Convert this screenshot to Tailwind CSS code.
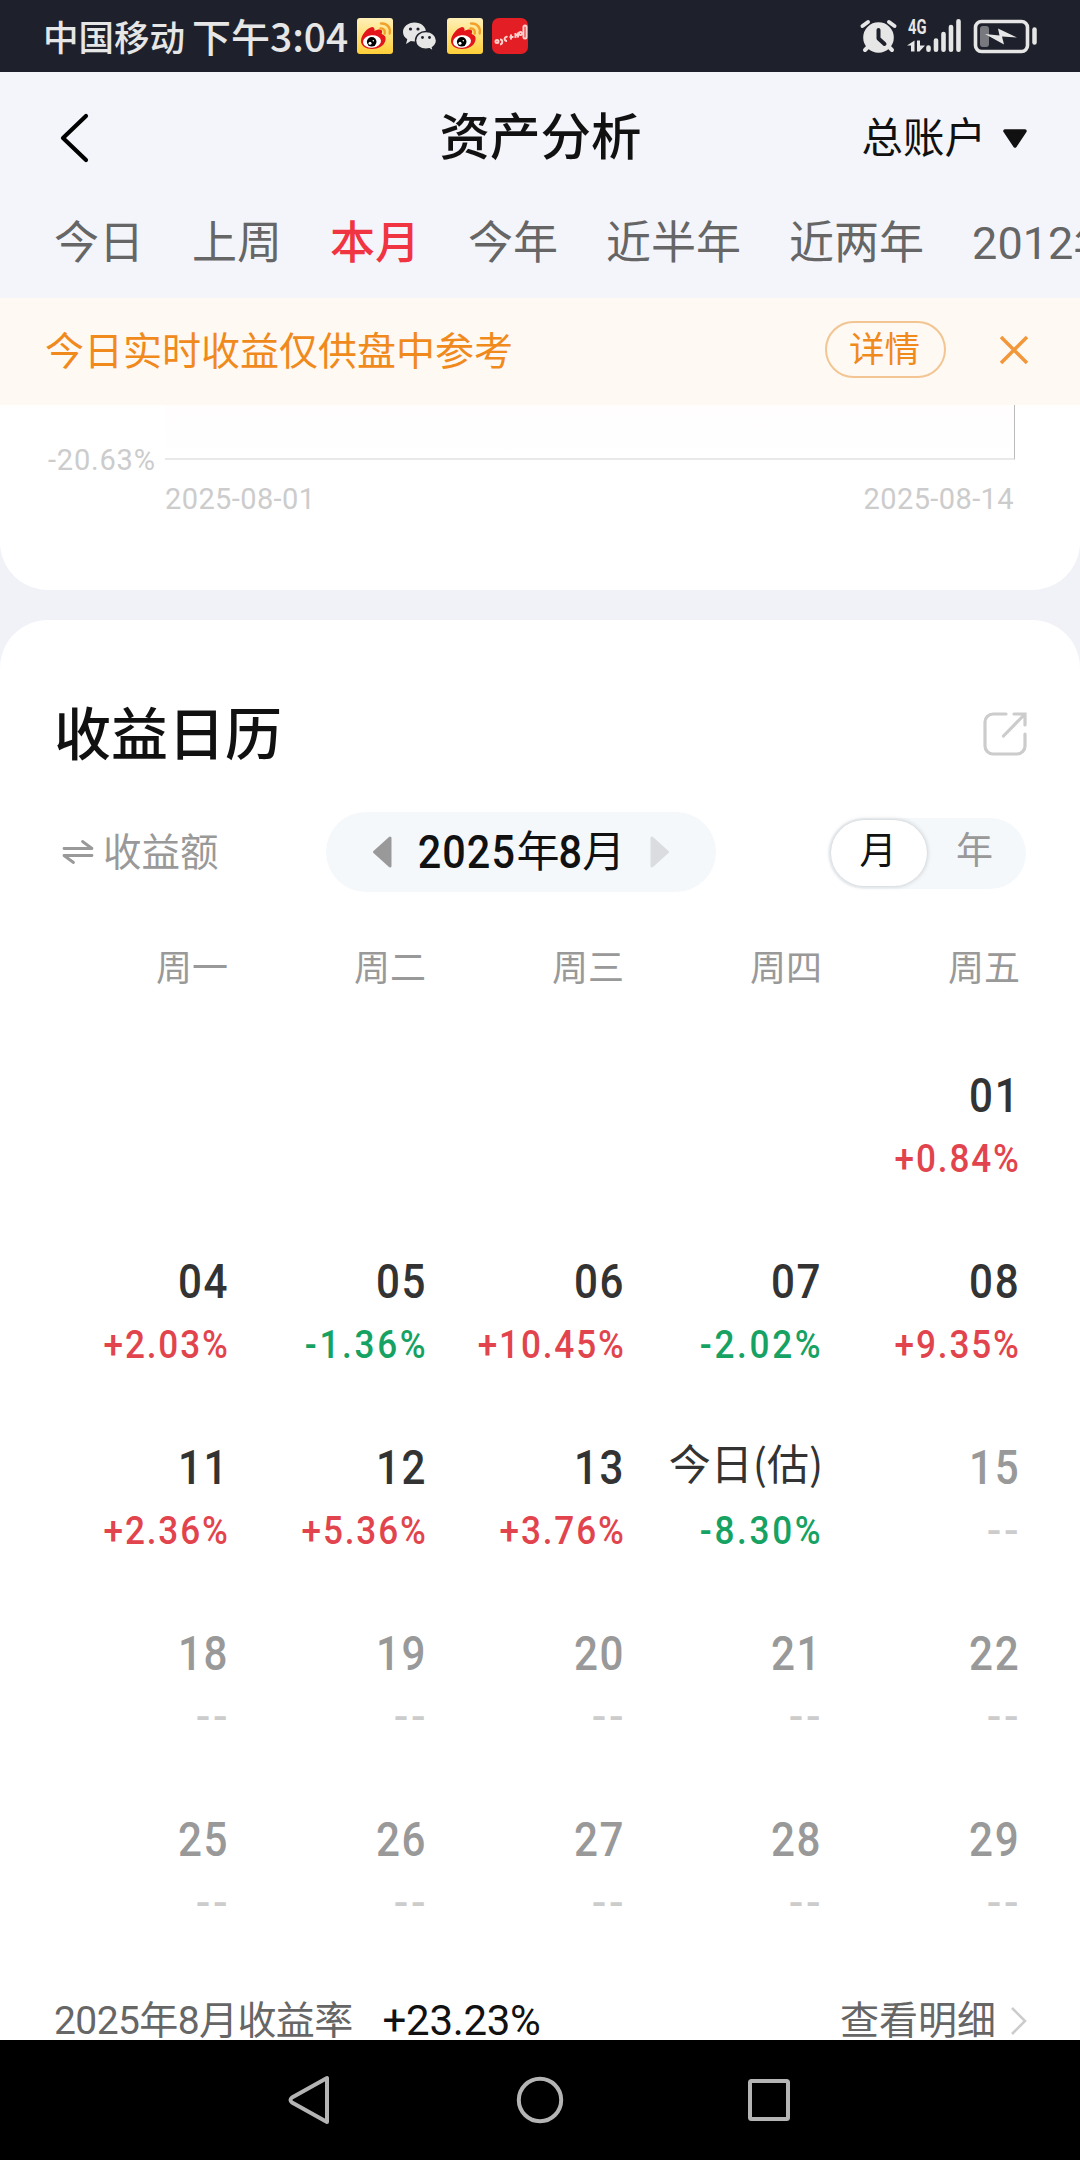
<!DOCTYPE html>
<html lang="zh-CN">
	<head>
		<meta charset="UTF-8" />
		<meta name="viewport" content="width=device-width, initial-scale=1.0" />
		<title>资产分析</title>
		<script src="https://cdn.jsdelivr.net/npm/@tailwindcss/browser@4"></script>
	</head>
	<body
		class="flex flex-col w-[1080px] h-[2160px] overflow-hidden bg-[#f0f2f7] text-[#111] whitespace-nowrap font-[Roboto,'Noto_Sans_CJK_SC',sans-serif]"
	>
		<!-- Status bar -->
		<div
			class="flex items-center justify-between h-[72px] shrink-0 bg-[#1e212b] text-[#e6e6e6] pl-[43px] pr-[43px] font-['Noto_Sans_CJK_SC',sans-serif]"
		>
			<div class="flex items-center">
				<span class="text-[35.5px] leading-[72px] w-[149px] font-medium">中国移动</span>
				<span class="text-[39px] leading-[72px] w-[165px] -mt-0.5 font-medium">下午3:04</span>
				<div class="flex items-center gap-[9px]">
					<svg class="size-9" viewBox="0 0 36 36">
						<defs>
							<linearGradient id="gold" x1="0" y1="0" x2="0" y2="1">
								<stop offset="0" stop-color="#fff0b8" />
								<stop offset="1" stop-color="#ffcf38" />
							</linearGradient>
							<g id="weibo">
								<rect width="36" height="36" rx="3" fill="url(#gold)" />
								<path d="M4 23C4 17 10 10 15 9c2 0 3 2 2.500 4 3-2 7-2 7.500 0 .4 1-.3 2-.3 3 3 1 4.500 3 3.800 6C27.500 28 21 31 15 31S4 28 4 23Z" fill="#e3141a" />
								<ellipse cx="15" cy="23.500" rx="9" ry="6.300" fill="#fff" transform="rotate(-6 15 23.500)" />
								<circle cx="14.700" cy="23.800" r="4.800" fill="#000" />
								<circle cx="13" cy="25.300" r="1.500" fill="#fff" />
								<circle cx="16.300" cy="22.700" r=".8" fill="#fff" />
								<path d="M23.500 10.500c3-.5 5 2 4.200 5M24 5.500c6-.6 10 4.200 8.700 10" fill="none" stroke="#f2a02c" stroke-width="2.400" stroke-linecap="round" />
							</g>
						</defs>
						<use href="#weibo" />
					</svg>
					<svg class="size-9" viewBox="0 0 36 36">
						<path d="M12.500 4.500C6 4.500 1 8.800 1 14c0 3 1.700 5.600 4.300 7.300L4 26l4.800-3c1.200.3 2.400.5 3.700.5 6.500 0 11.500-4.200 11.500-9.500S19 4.500 12.500 4.500Z" fill="#e6e6e6" />
						<path d="M24 13.500c-6 0-10.500 4-10.500 9S18 31.300 24 31.300c1.200 0 2.300-.2 3.400-.5l4 2.500-1-3.800c2.500-1.600 4.100-4.100 4.100-7 0-5-4.500-9-10.500-9Z" fill="#e6e6e6" stroke="#1e212b" stroke-width="1.400" />
						<g fill="#1e212b">
							<circle cx="8.500" cy="11" r="1.600" />
							<circle cx="16" cy="11" r="1.600" />
							<circle cx="20.500" cy="19.500" r="1.400" />
							<circle cx="27.500" cy="19.500" r="1.400" />
						</g>
					</svg>
					<svg class="size-9" viewBox="0 0 36 36"><use href="#weibo" /></svg>
					<svg class="size-9" viewBox="0 0 36 36">
						<rect width="36" height="36" rx="7" fill="#e31e24" />
						<g fill="none" stroke="#ffd0cc" stroke-width="2">
							<circle cx="5" cy="23.500" r="1.500" />
							<path d="M8 21.500c3 0 3 4.500 0 5" />
							<path d="M15.500 19c-3.500-1-4 4-.5 4" />
							<path d="M19 16.500v5M17.500 19h4M23.500 15v5M26 14.500v5M23 17h4" />
							<circle cx="28.500" cy="15.500" r="1.500" />
							<rect x="31.500" y="7.500" width="3" height="13" rx="1.500" />
						</g>
					</svg>
				</div>
			</div>
			<svg class="w-[178px] h-9 overflow-visible" viewBox="0 0 178 36" fill="#e6e6e6">
				<!-- alarm clock -->
				<circle cx="19.500" cy="19.500" r="15.300" />
				<path d="M3.500 8 9 4M35.500 8 30 4M8.500 29.500 6 32M30.500 29.500 33 32" stroke="#e6e6e6" stroke-width="4" stroke-linecap="round" />
				<path d="M19.500 12v8.500l6 5.500" fill="none" stroke="#1e212b" stroke-width="4" stroke-linecap="round" stroke-linejoin="round" />
				<!-- signal -->
				<text x="49" y="16" font-family="Roboto" font-weight="700" font-size="20.500" textLength="18.500" lengthAdjust="spacingAndGlyphs">4G</text>
				<path d="M55.500 22.500v11H52V27.500h-4ZM58 22.500h3v5h5l-5.500 6H58Z" />
				<path d="M69.500 29.500v2.300M77 22.500v9.300M84.500 16v15.800M92 9v22.800M99.500 3.200v28.600" stroke="#e6e6e6" stroke-width="4.600" stroke-linecap="round" />
				<!-- battery -->
				<rect x="116.500" y="3.500" width="52" height="30" rx="6" fill="none" stroke="#e6e6e6" stroke-width="3.600" />
				<rect x="121" y="8" width="9" height="21" rx="3" fill="#77797f" />
				<path d="m126 16 14.500 1.500-1.500-7 19 9-15-1 2 8Z" />
				<path d="M175.500 11.500v13" stroke="#e6e6e6" stroke-width="4.500" stroke-linecap="round" />
			</svg>
		</div>

		<!-- Title bar -->
		<header class="grid grid-cols-3 items-center h-[132px] shrink-0 bg-[#f4f5fa] pl-[59px] pr-[52px]">
			<svg class="w-8 h-[50px]" viewBox="0 0 32 50">
				<path d="M27 3 4 25l23 22" fill="none" stroke="#000" stroke-width="4.200" stroke-linecap="round" stroke-linejoin="round" />
			</svg>
			<h1 class="text-[50.5px] leading-[72px] font-medium text-center -ml-1.5">资产分析</h1>
			<div class="flex items-center justify-end gap-4">
				<span class="text-[41.5px] leading-[60px] mt-0.5">总账户</span>
				<svg class="w-[26px] h-5 mt-0.5" viewBox="0 0 26 20">
					<path d="M3 2h20L13 17Z" fill="#111" stroke="#111" stroke-width="3.500" stroke-linejoin="round" />
				</svg>
			</div>
		</header>

		<!-- Period tabs -->
		<nav class="flex gap-12 h-[94px] shrink-0 bg-[#f4f5fa] pl-[54px] text-[45px] leading-[80px] text-[#666] overflow-hidden">
			<span>今日</span>
			<span>上周</span>
			<span class="font-medium text-[#f03441]">本月</span>
			<span>今年</span>
			<span>近半年</span>
			<span>近两年</span>
			<span>2012年</span>
		</nav>

		<!-- Notice -->
		<div class="flex items-center h-[107px] shrink-0 bg-[#fff9f4] text-[#f08a1c] pl-[45px] pr-[50px]">
			<span class="grow text-[39px] leading-[56px]">今日实时收益仅供盘中参考</span>
			<span class="flex items-center justify-center w-[121px] h-[57px] -mt-1 rounded-full border-2 border-[#f2c592] text-[35.5px] pr-0.5 pt-0.5">详情</span>
			<svg class="w-8 h-8 ml-[52px] -mt-1" viewBox="0 0 32 32">
				<path d="m3 3 26 26M29 3 3 29" stroke="#f2973a" stroke-width="3.500" />
			</svg>
		</div>

		<!-- Chart bottom -->
		<section class="h-[185px] shrink-0 bg-white rounded-b-[48px] text-[#ccc] text-[29px]">
			<div class="flex h-[55px] pl-[48px]">
				<span class="w-[117px] shrink-0 pt-[38px] leading-[34px] tracking-[0.8px]">-20.63%</span>
				<div class="w-[850px] border-b-2 border-[#e9e9e9] border-r border-r-[#bbb] bg-linear-to-b from-[#fffdfd] to-white"></div>
			</div>
			<div class="flex justify-between pl-[165px] pr-[66px] pt-[22px] leading-[34px] tracking-[0.4px]">
				<span>2025-08-01</span>
				<span>2025-08-14</span>
			</div>
		</section>

		<!-- Profit calendar -->
		<main class="flex flex-col h-[1420px] shrink-0 mt-[30px] bg-white rounded-t-[48px]">
			<div class="flex items-center justify-between pl-[54px] pr-[53px] mt-[75px] h-20">
				<h2 class="text-[57px] font-medium leading-20 pt-0.5">收益日历</h2>
				<svg class="w-11 h-11 -mt-0.5" viewBox="0 0 44 44">
					<path d="M23 2H10a8 8 0 0 0-8 8v24a8 8 0 0 0 8 8h24a8 8 0 0 0 8-8V22M31 2h11v11M41 3 20.500 24" fill="none" stroke="#ccc" stroke-width="3.200" stroke-linecap="round" />
				</svg>
			</div>

			<div class="flex items-center mt-[37px] h-20 pl-[62px] pr-[54px]">
				<div class="flex items-center gap-[9px] w-[264px] text-[38.5px] text-[#999]">
					<svg class="w-8 h-7" viewBox="0 0 32 28">
						<path d="M2 10.500h28L20.500 3.500M30 17.500H2l9.500 7" fill="none" stroke="#999" stroke-width="2.800" stroke-linecap="round" stroke-linejoin="round" />
					</svg>
					<span class="leading-[56px] pt-0.5">收益额</span>
				</div>
				<div class="flex items-center justify-center w-[390px] h-20 rounded-full bg-[#f4f8fb]">
					<svg class="w-5 h-[34px]" viewBox="0 0 20 34">
						<path d="M18 3v28L2.500 17Z" fill="#999" stroke="#999" stroke-width="3" stroke-linejoin="round" />
					</svg>
					<span class="flex items-center justify-center w-[258px] text-[47px] leading-[60px] font-medium">
						<span class="-mx-1.5 scale-x-88 tracking-[1.2px]">2025</span>
						<span class="text-[43px] font-normal">年</span>
						<span class="-mx-0.5 scale-x-88">8</span>
						<span class="text-[43px] font-normal">月</span>
					</span>
					<svg class="w-5 h-[34px]" viewBox="0 0 20 34">
						<path d="M2 3v28l15.500-14Z" fill="#dadce0" stroke="#dadce0" stroke-width="3" stroke-linejoin="round" />
					</svg>
				</div>
				<div class="flex items-center ml-auto w-[198px] h-[71px] mt-0.5 rounded-full bg-[#f4f8fb] pl-[3px] text-[37px] leading-[56px]">
					<span class="flex items-center justify-center w-[96px] h-[66px] rounded-full bg-white shadow-[0_0_5px_rgba(0,0,0,0.22)] pb-0.5 pr-0.5">月</span>
					<span class="grow text-center text-[#999] pr-1 pb-0.5">年</span>
				</div>
			</div>

			<div class="grid grid-cols-5 pl-[30px] pr-[60px] mt-[52px] text-right text-[36px] leading-[50px] text-[#999]">
				<span>周一</span><span>周二</span><span>周三</span><span>周四</span><span>周五</span>
			</div>

			<div id="days" class="grid grid-cols-5 auto-rows-[186px] pl-[30px] pr-[61px] mt-[70px] text-right"></div>

			<div class="flex items-center pl-[54px] pr-[52px] h-[56px] -mt-px text-[39px] leading-[56px] text-[#666]">
				<span class="tracking-[-0.6px]">2025年8月收益率</span>
				<span class="ml-[30px] text-[42px] text-[#111] tracking-[-0.3px]">+23.23%</span>
				<span class="ml-auto">查看明细</span>
				<svg class="w-[18px] h-[30px] ml-[14px]" viewBox="0 0 18 30">
					<path d="m2 2 13 13L2 28" fill="none" stroke="#ccc" stroke-width="2.600" />
				</svg>
			</div>
		</main>

		<!-- System navigation -->
		<footer class="flex items-center justify-center h-[120px] shrink-0 bg-black">
			<svg class="w-[510px] h-[50px]" viewBox="0 0 510 50" fill="none" stroke="#b4b4b4" stroke-width="4" stroke-linejoin="round">
				<path d="M42 3v44L7 27.500Q4 25 7 22.500Z" />
				<circle cx="255" cy="25" r="21.200" />
				<rect x="465" y="6" width="38" height="38" rx="1.500" />
			</svg>
		</footer>

		<script>
			const days = [
				null, null, null, null, ["01", "+0.84%"],
				["04", "+2.03%"], ["05", "-1.36%"], ["06", "+10.45%"], ["07", "-2.02%"], ["08", "+9.35%"],
				["11", "+2.36%"], ["12", "+5.36%"], ["13", "+3.76%"], ["今日(估)", "-8.30%"], ["15", "--"],
				["18", "--"], ["19", "--"], ["20", "--"], ["21", "--"], ["22", "--"],
				["25", "--"], ["26", "--"], ["27", "--"], ["28", "--"], ["29", "--"],
			];

			document.getElementById("days").innerHTML = days
				.map((day) => {
					if (!day) return "<div></div>";
					const [date, rate] = day;
					let dateClass = "text-[49px] scale-x-86 origin-right tracking-[2px] -mr-[1.5px] font-medium text-[#333]";
					let rateClass = "scale-x-90 tracking-[2.1px] -mr-[2px] text-[#e2444d]";
					if (rate[0] === "-") rateClass = "scale-x-90 tracking-[3px] -mr-[2.6px] text-[#16a263]";
					if (date.startsWith("今")) dateClass = "text-[42px] text-[#333] font-['Noto_Sans_CJK_SC',sans-serif] -mt-1.5 mb-1.5 -mr-0.5";
					if (rate === "--") {
						dateClass = "text-[49px] scale-x-86 origin-right tracking-[2px] -mr-[1.5px] font-medium text-[#999]";
						rateClass = "scale-x-110 tracking-[2.5px] -mr-[2.5px] text-[#ccc]";
					}
					return `<div>
						<div class="h-[64px] leading-[64px] ${dateClass}">${date}</div>
						<div class="h-[62px] leading-[62px] text-[39px] font-medium origin-right ${rateClass}">${rate}</div>
					</div>`;
				})
				.join("");
		</script>
	</body>
</html>
